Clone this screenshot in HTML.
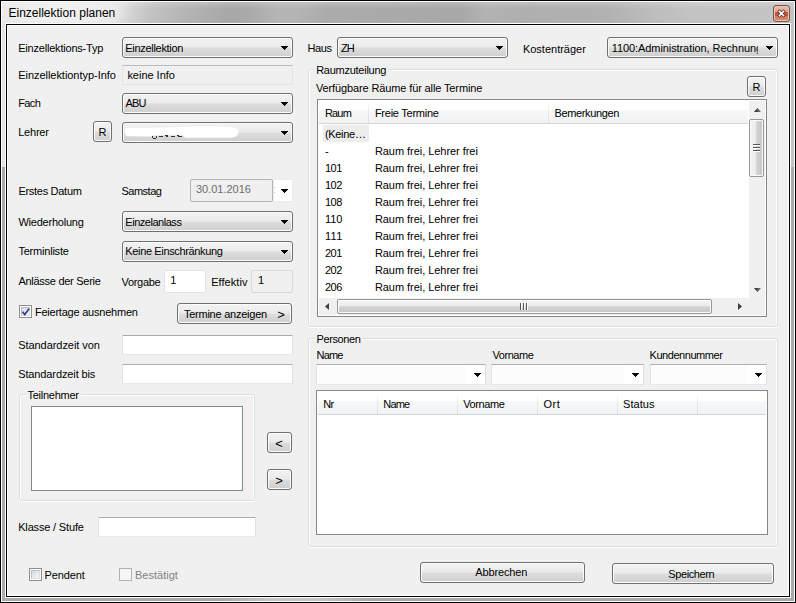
<!DOCTYPE html>
<html><head><meta charset="utf-8"><title>Einzellektion planen</title>
<style>
*{box-sizing:border-box;margin:0;padding:0}
html,body{width:796px;height:603px;overflow:hidden;background:#fff}
body{position:relative;font-family:'Liberation Sans',sans-serif;font-size:11px;color:#000}
.a{position:absolute}
.t{position:absolute;white-space:nowrap;height:13px;line-height:13px;font-size:11px}
.btn{position:absolute;border:1px solid #707070;border-radius:3px;
 background:linear-gradient(#f2f2f2 0%,#ebebeb 49%,#dddddd 51%,#cfcfcf 100%);
 box-shadow:inset 0 0 0 1px #fcfcfc}
.arr{position:absolute;width:0;height:0;border-left:4px solid transparent;border-right:4px solid transparent;border-top:4px solid #000}
.ed{position:absolute;background:#fff;border:1px solid #e2e3ea;border-top-color:#abadb3;border-bottom-color:#e3e9ef;border-right-color:#dbdfe6;border-radius:1px}
.ro{background:#f0f0f0;border-color:#e2e6ea;border-top-color:#b9bdc3}
.lt{border-color:#e1e5ea;border-radius:2px}
.rd{border-color:#d6dadf;border-radius:2px}
.gb{position:absolute;border:1px solid #d5dfe5;border-radius:3px;box-shadow:inset 1px 1px 0 #fff,inset -1px 0 0 #fff,0 1px 0 #fff}
.lv{position:absolute;background:#fff;border:1px solid #828790}
.hd{position:absolute;background:linear-gradient(#ffffff 0%,#ffffff 40%,#f7f8fa 41%,#f1f2f4 100%);border-bottom:1px solid #d5d5d5}
.hs{position:absolute;width:1px;background:linear-gradient(#ffffff,#e3e4e6 60%,#dedfe1)}
.cb{position:absolute;width:13px;height:13px;border:1px solid #8e8f8f;background:#fdfdfd}
.cbi{position:absolute;left:1px;top:1px;width:9px;height:9px;border:1px solid;border-color:#bcc0c6 #dcdee1 #dfe1e4 #bcc0c6;background:linear-gradient(135deg,#d6d9de,#f6f6f6)}
</style></head>
<body>
<div class="a" style="left:0px;top:0px;width:796px;height:603px;background:#000;"></div>
<div class="a" style="left:1px;top:1px;width:794px;height:601px;background:#fff;"></div>
<div class="a" style="left:2px;top:2px;width:792px;height:599px;background:#aaaaaa;"></div>
<div class="a" style="left:2px;top:2px;width:792px;height:165px;background:linear-gradient(90deg,#e4e4e4 0%,#e4e4e4 50%,#c3c3c3 50%,#c3c3c3 100%);"></div>
<div class="a" style="left:2px;top:2px;width:792px;height:21px;background:linear-gradient(100deg,#e8e8e8 0%,#e5e5e5 14.5%,#d2d2d2 16.5%,#c2c2c2 19%,#b5b5b5 23%,#a8a8a8 28.5%,#a9a9a9 31%,#b5b5b5 35%,#b4b4b4 37.5%,#ababab 41%,#a8a8a8 58%,#b2b2b2 61%,#afafaf 66%,#b1b1b1 76%,#bcbcbc 82%,#c3c3c3 87%,#c4c4c4 100%);"></div>
<div class="a" style="left:2px;top:2px;width:792px;height:7px;background:linear-gradient(rgba(255,255,255,.2),rgba(255,255,255,0));"></div>
<div class="a" style="left:2px;top:598px;width:792px;height:3px;background:linear-gradient(90deg,#aaaaaa 0%,#aaaaaa 28%,#c6c6c6 34%,#c6c6c6 40%,#aaaaaa 46%,#aaaaaa 100%);"></div>
<div class="a" style="left:5px;top:23px;width:786px;height:575px;background:#fff;"></div>
<div class="a" style="left:6px;top:24px;width:784px;height:573px;background:#000;"></div>
<div class="a" style="left:7px;top:25px;width:782px;height:571px;background:#fff;"></div>
<div class="a" style="left:8px;top:26px;width:780px;height:569px;background:#f0f0f0;"></div>
<div class="a" style="left:2px;top:2px;width:140px;height:21px;background:radial-gradient(ellipse 70px 14px at 62px 11px,rgba(255,255,255,.5) 0%,rgba(255,255,255,.3) 60%,rgba(255,255,255,0) 100%)"></div>
<div class="t" style="left:8.5px;top:6px;font-size:12px;height:15px;line-height:15px;letter-spacing:0px" id="title">Einzellektion planen</div>
<div class="a" style="left:773px;top:5px;width:17px;height:17px;border:1px solid #5c5c62;border-radius:3px;background:linear-gradient(#f0b8a4 0%,#e8a28c 40%,#c9502c 42%,#cb5430 66%,#dc7a5a 70%,#e08a6a 100%);box-shadow:inset 0 0 0 1px #f4c0ac"></div>
<svg class="a" style="left:777px;top:9px" width="9" height="9" viewBox="0 0 9 9"><path d="M2.4 2.4 L6.600 6.600 M6.600 2.400 L2.400 6.600" stroke="#4a3a40" stroke-width="3.2" stroke-linecap="square"/><path d="M2.500 2.500 L6.500 6.500 M6.500 2.500 L2.500 6.500" stroke="#fff" stroke-width="1.700" stroke-linecap="square"/></svg>
<div class="btn" style="left:122px;top:37px;width:171px;height:21px"></div>
<svg class="a" style="left:281px;top:46px" width="7" height="4" viewBox="0 0 7 4" shape-rendering="crispEdges"><path d="M0 0h7v1h-1v1h-1v1h-1v1h-1v-1h-1v-1h-1v-1h-1z" fill="#000"/></svg>
<div class="ed ro" style="left:122px;top:65px;width:171px;height:20px"></div>
<div class="btn" style="left:122px;top:93px;width:171px;height:21px"></div>
<svg class="a" style="left:281px;top:102px" width="7" height="4" viewBox="0 0 7 4" shape-rendering="crispEdges"><path d="M0 0h7v1h-1v1h-1v1h-1v1h-1v-1h-1v-1h-1v-1h-1z" fill="#000"/></svg>
<div class="btn" style="left:93px;top:121px;width:19px;height:21px"></div>
<div class="btn" style="left:122px;top:122px;width:171px;height:21px"></div>
<svg class="a" style="left:281px;top:131px" width="7" height="4" viewBox="0 0 7 4" shape-rendering="crispEdges"><path d="M0 0h7v1h-1v1h-1v1h-1v1h-1v-1h-1v-1h-1v-1h-1z" fill="#000"/></svg>
<svg class="a" style="left:122px;top:122px" width="171" height="21" viewBox="0 0 171 21"><path d="M3 8 Q3 6 6 6 L40 5.800 L60 5 Q70 4 80 4.300 L106 4.800 Q116.500 5.500 116.500 10 Q116.500 15.700 108 15.700 L63 15.700 L61 13.200 L31 13.500 L30 14.400 L6 14.300 Q3 14 3 10 Z" fill="#fff"/></svg>
<div class="a" style="left:190px;top:179px;width:83px;height:23px;background:#efefef;border:1px solid #b5b5b5;border-radius:2px"></div>
<div class="a" style="left:273px;top:179px;width:20px;height:23px;background:#fff;border:1px solid #e9ecf0"></div>
<div class="a" style="left:274px;top:187px;width:1px;height:1px;background:#f3b080"></div><div class="a" style="left:274px;top:192px;width:1px;height:1px;background:#f3b080"></div>
<svg class="a" style="left:281px;top:189px" width="7" height="4" viewBox="0 0 7 4" shape-rendering="crispEdges"><path d="M0 0h7v1h-1v1h-1v1h-1v1h-1v-1h-1v-1h-1v-1h-1z" fill="#000"/></svg>
<div class="btn" style="left:122px;top:211px;width:171px;height:21px"></div>
<svg class="a" style="left:281px;top:220px" width="7" height="4" viewBox="0 0 7 4" shape-rendering="crispEdges"><path d="M0 0h7v1h-1v1h-1v1h-1v1h-1v-1h-1v-1h-1v-1h-1z" fill="#000"/></svg>
<div class="btn" style="left:122px;top:241px;width:171px;height:21px"></div>
<svg class="a" style="left:281px;top:250px" width="7" height="4" viewBox="0 0 7 4" shape-rendering="crispEdges"><path d="M0 0h7v1h-1v1h-1v1h-1v1h-1v-1h-1v-1h-1v-1h-1z" fill="#000"/></svg>
<div class="ed lt" style="left:164px;top:270px;width:42px;height:23px"></div>
<div class="ed ro rd" style="left:251px;top:270px;width:42px;height:23px"></div>
<div class="cb" style="left:19px;top:305px"><div class="cbi"></div></div>
<svg class="a" style="left:21px;top:307px" width="10" height="10" viewBox="0 0 10 10"><path d="M1.5 4.8 L3.8 7.6 L8.2 1.4" fill="none" stroke="#35418f" stroke-width="1.7"/></svg>
<div class="btn" style="left:177px;top:303px;width:115px;height:21px"></div>
<div class="ed " style="left:122px;top:335px;width:171px;height:20px"></div>
<div class="ed " style="left:122px;top:364px;width:171px;height:20px"></div>
<div class="gb" style="left:19px;top:394px;width:236px;height:107px"></div>
<div class="lv" style="left:31px;top:406px;width:212px;height:85px"></div>
<div class="btn" style="left:267px;top:432px;width:25px;height:21px"></div>
<div class="btn" style="left:267px;top:469px;width:25px;height:21px"></div>
<div class="ed " style="left:98px;top:517px;width:158px;height:20px"></div>
<div class="cb" style="left:29px;top:568px"><div class="cbi"></div></div>
<div class="cb" style="left:119px;top:568px;border-color:#b1b1b1;box-shadow:none;background:#f6f6f6"></div>
<div class="a" style="left:152px;top:136px;width:1px;height:2px;background:#333;"></div>
<div class="a" style="left:153px;top:138px;width:3px;height:1px;background:#333;"></div>
<div class="a" style="left:156px;top:136px;width:1px;height:2px;background:#333;"></div>
<div class="a" style="left:159px;top:136px;width:4px;height:1px;background:#333;"></div>
<div class="a" style="left:165px;top:135px;width:3px;height:1px;background:#333;"></div>
<div class="a" style="left:166px;top:136px;width:2px;height:1px;background:#333;"></div>
<div class="a" style="left:171px;top:136px;width:4px;height:1px;background:#333;"></div>
<div class="a" style="left:177px;top:135px;width:2px;height:1px;background:#333;"></div>
<div class="a" style="left:178px;top:136px;width:4px;height:1px;background:#333;"></div>
<div class="btn" style="left:337px;top:37px;width:171px;height:21px"></div>
<svg class="a" style="left:496px;top:46px" width="7" height="4" viewBox="0 0 7 4" shape-rendering="crispEdges"><path d="M0 0h7v1h-1v1h-1v1h-1v1h-1v-1h-1v-1h-1v-1h-1z" fill="#000"/></svg>
<div class="btn" style="left:607px;top:37px;width:171px;height:21px"></div>
<svg class="a" style="left:766px;top:46px" width="7" height="4" viewBox="0 0 7 4" shape-rendering="crispEdges"><path d="M0 0h7v1h-1v1h-1v1h-1v1h-1v-1h-1v-1h-1v-1h-1z" fill="#000"/></svg>
<div class="gb" style="left:308px;top:69px;width:470px;height:258px"></div>
<div class="btn" style="left:747px;top:76px;width:19px;height:21px"></div>
<div class="lv" style="left:317px;top:99px;width:450px;height:218px;box-shadow:inset 0 0 0 1px #fff"></div>
<div class="hd" style="left:319px;top:101px;width:429px;height:23px"></div>
<div class="hs" style="left:368px;top:101px;height:22px"></div>
<div class="hs" style="left:548px;top:101px;height:22px"></div>
<div class="a" style="left:323px;top:125px;width:46px;height:17px;background:#ededed;"></div>
<div class="a" style="left:749px;top:101px;width:16px;height:197px;background:#f0f0f0;"></div>
<div class="a" style="left:749px;top:119px;width:15px;height:58px;border:1px solid #979797;border-radius:2px;background:linear-gradient(90deg,#f4f4f4 0%,#ebebeb 45%,#d2d2d2 52%,#c6c6c6 100%);box-shadow:inset 0 0 0 1px #fafafa"></div>
<div class="a" style="left:753px;top:144px;width:7px;height:2px;background:linear-gradient(#555 50%,#ffffff 50%);"></div>
<div class="a" style="left:753px;top:147px;width:7px;height:2px;background:linear-gradient(#555 50%,#ffffff 50%);"></div>
<div class="a" style="left:753px;top:150px;width:7px;height:2px;background:linear-gradient(#555 50%,#ffffff 50%);"></div>
<svg class="a" style="left:753px;top:107px" width="9" height="6" viewBox="0 0 9 6"><defs><linearGradient id="ag" x1="0" y1="0" x2="1" y2="0"><stop offset="0" stop-color="#202020"/><stop offset="1" stop-color="#808080"/></linearGradient></defs><path d="M1 5 L4.5 1 L8 5 Z" fill="url(#ag)"/></svg>
<svg class="a" style="left:753px;top:287px" width="9" height="6" viewBox="0 0 9 6"><path d="M1 1 L8 1 L4.5 5 Z" fill="url(#ag)"/></svg>
<div class="a" style="left:319px;top:298px;width:429px;height:17px;background:#f0f0f0;"></div>
<div class="a" style="left:748px;top:298px;width:17px;height:17px;background:#f0f0f0;"></div>
<div class="a" style="left:337px;top:299px;width:375px;height:15px;border:1px solid #979797;border-radius:2px;background:linear-gradient(#f4f4f4 0%,#ebebeb 45%,#d2d2d2 52%,#c6c6c6 100%);box-shadow:inset 0 0 0 1px #fafafa"></div>
<div class="a" style="left:520px;top:303px;width:2px;height:7px;background:linear-gradient(90deg,#555 50%,#ffffff 50%);"></div>
<div class="a" style="left:523px;top:303px;width:2px;height:7px;background:linear-gradient(90deg,#555 50%,#ffffff 50%);"></div>
<div class="a" style="left:526px;top:303px;width:2px;height:7px;background:linear-gradient(90deg,#555 50%,#ffffff 50%);"></div>
<svg class="a" style="left:324px;top:302px" width="6" height="9" viewBox="0 0 6 9"><path d="M5 1 L1 4.5 L5 8 Z" fill="#404040"/></svg>
<svg class="a" style="left:737px;top:302px" width="6" height="9" viewBox="0 0 6 9"><path d="M1 1 L5 4.5 L1 8 Z" fill="#404040"/></svg>
<div class="gb" style="left:308px;top:338px;width:470px;height:209px"></div>
<div class="ed" style="left:316px;top:364px;width:170px;height:21px;background:#fcfcfc"></div>
<div class="a" style="left:466px;top:365px;width:19px;height:19px;background:#fff;"></div>
<svg class="a" style="left:474px;top:373px" width="7" height="4" viewBox="0 0 7 4" shape-rendering="crispEdges"><path d="M0 0h7v1h-1v1h-1v1h-1v1h-1v-1h-1v-1h-1v-1h-1z" fill="#000"/></svg>
<div class="ed" style="left:491px;top:364px;width:153px;height:21px;background:#fcfcfc"></div>
<div class="a" style="left:624px;top:365px;width:19px;height:19px;background:#fff;"></div>
<svg class="a" style="left:632px;top:373px" width="7" height="4" viewBox="0 0 7 4" shape-rendering="crispEdges"><path d="M0 0h7v1h-1v1h-1v1h-1v1h-1v-1h-1v-1h-1v-1h-1z" fill="#000"/></svg>
<div class="ed" style="left:650px;top:364px;width:117px;height:21px;background:#fcfcfc"></div>
<div class="a" style="left:747px;top:365px;width:19px;height:19px;background:#fff;"></div>
<svg class="a" style="left:755px;top:373px" width="7" height="4" viewBox="0 0 7 4" shape-rendering="crispEdges"><path d="M0 0h7v1h-1v1h-1v1h-1v1h-1v-1h-1v-1h-1v-1h-1z" fill="#000"/></svg>
<div class="lv" style="left:316px;top:390px;width:452px;height:145px;box-shadow:inset 0 0 0 1px #fff"></div>
<div class="hd" style="left:318px;top:392px;width:448px;height:23px"></div>
<div class="hs" style="left:377px;top:392px;height:22px"></div>
<div class="hs" style="left:457px;top:392px;height:22px"></div>
<div class="hs" style="left:537px;top:392px;height:22px"></div>
<div class="hs" style="left:617px;top:392px;height:22px"></div>
<div class="hs" style="left:697px;top:392px;height:22px"></div>
<div class="btn" style="left:420px;top:562px;width:165px;height:21px"></div>
<div class="btn" style="left:612px;top:563px;width:162px;height:21px"></div>
<div class="t" style="left:18.2px;top:41.5px;letter-spacing:-0.203px;">Einzellektions-Typ</div>
<div class="t" style="left:18.2px;top:68.5px;letter-spacing:-0.038px;">Einzellektiontyp-Info</div>
<div class="t" style="left:18.2px;top:96.5px;letter-spacing:-0.590px;">Fach</div>
<div class="t" style="left:18.2px;top:125.5px;letter-spacing:-0.219px;">Lehrer</div>
<div class="t" style="left:18.4px;top:184.9px;letter-spacing:-0.286px;">Erstes Datum</div>
<div class="t" style="left:121.5px;top:184.9px;letter-spacing:-0.504px;">Samstag</div>
<div class="t" style="left:18.4px;top:215.8px;letter-spacing:-0.216px;">Wiederholung</div>
<div class="t" style="left:18.4px;top:244.5px;letter-spacing:-0.208px;">Terminliste</div>
<div class="t" style="left:18.4px;top:275.3px;letter-spacing:-0.271px;">Anlässe der Serie</div>
<div class="t" style="left:121.5px;top:275.8px;letter-spacing:-0.297px;">Vorgabe</div>
<div class="t" style="left:211.2px;top:275.8px;letter-spacing:0.046px;">Effektiv</div>
<div class="t" style="left:34.9px;top:305.5px;letter-spacing:-0.223px;">Feiertage ausnehmen</div>
<div class="t" style="left:18.2px;top:338.5px;letter-spacing:-0.057px;">Standardzeit von</div>
<div class="t" style="left:18.2px;top:367.5px;letter-spacing:-0.113px;">Standardzeit bis</div>
<div class="t" style="left:27.5px;top:388.5px;letter-spacing:-0.268px;background:#f0f0f0;box-shadow:-2px 0 0 #f0f0f0,2px 0 0 #f0f0f0;">Teilnehmer</div>
<div class="t" style="left:18.2px;top:520.8px;letter-spacing:-0.167px;">Klasse / Stufe</div>
<div class="t" style="left:44.4px;top:568.5px;letter-spacing:-0.081px;">Pendent</div>
<div class="t" style="left:134.9px;top:568.5px;letter-spacing:0.023px;color:#838383;">Bestätigt</div>
<div class="t" style="left:125.3px;top:41.5px;letter-spacing:-0.305px;">Einzellektion</div>
<div class="t" style="left:127.4px;top:68.5px;letter-spacing:-0.023px;">keine Info</div>
<div class="t" style="left:125.5px;top:97.0px;letter-spacing:-0.800px;">ABU</div>
<div class="t" style="left:125.3px;top:215.5px;letter-spacing:-0.470px;">Einzelanlass</div>
<div class="t" style="left:125.3px;top:245.2px;letter-spacing:-0.354px;">Keine Einschränkung</div>
<div class="t" style="left:195.9px;top:182.8px;letter-spacing:-0.007px;color:#6d6d6d;">30.01.2016</div>
<div class="t" style="left:170.3px;top:274.0px;">1</div>
<div class="t" style="left:257.9px;top:274.0px;">1</div>
<div class="t" style="left:183.9px;top:307.9px;letter-spacing:-0.236px;">Termine anzeigen</div>
<div class="t" style="left:277.2px;top:307.9px;font-size:13px;">></div>
<div class="t" style="left:275.2px;top:436.5px;font-size:13px;"><</div>
<div class="t" style="left:275.2px;top:473.5px;font-size:13px;">></div>
<div class="t" style="left:98.4px;top:125.5px;">R</div>
<div class="t" style="left:752.4px;top:80.5px;">R</div>
<div class="t" style="left:307.4px;top:41.5px;letter-spacing:-0.396px;">Haus</div>
<div class="t" style="left:340.9px;top:41.5px;letter-spacing:-0.800px;">ZH</div>
<div class="t" style="left:522.9px;top:42.5px;letter-spacing:0.001px;">Kostenträger</div>
<div class="t" style="left:611.7px;top:41.5px;width:146px;overflow:hidden;letter-spacing:-0.08px;">1100:Administration, Rechnungswesen</div>
<div class="t" style="left:316.2px;top:64.2px;letter-spacing:-0.265px;background:#f0f0f0;box-shadow:-2px 0 0 #f0f0f0,2px 0 0 #f0f0f0;">Raumzuteilung</div>
<div class="t" style="left:315.9px;top:81.5px;letter-spacing:-0.122px;">Verfügbare Räume für alle Termine</div>
<div class="t" style="left:324.9px;top:106.5px;letter-spacing:-0.800px;">Raum</div>
<div class="t" style="left:374.9px;top:106.5px;letter-spacing:-0.254px;">Freie Termine</div>
<div class="t" style="left:554.4px;top:106.5px;letter-spacing:-0.350px;">Bemerkungen</div>
<div class="t" style="left:324.9px;top:128.0px;letter-spacing:-0.299px;">(Keine…</div>
<div class="t" style="left:324.9px;top:145.0px;">-</div>
<div class="t" style="left:374.9px;top:145.0px;letter-spacing:-0.045px;">Raum frei, Lehrer frei</div>
<div class="t" style="left:324.9px;top:162.0px;letter-spacing:-0.430px;">101</div>
<div class="t" style="left:374.9px;top:162.0px;letter-spacing:-0.045px;">Raum frei, Lehrer frei</div>
<div class="t" style="left:324.9px;top:179.0px;letter-spacing:-0.430px;">102</div>
<div class="t" style="left:374.9px;top:179.0px;letter-spacing:-0.045px;">Raum frei, Lehrer frei</div>
<div class="t" style="left:324.9px;top:196.0px;letter-spacing:-0.430px;">108</div>
<div class="t" style="left:374.9px;top:196.0px;letter-spacing:-0.045px;">Raum frei, Lehrer frei</div>
<div class="t" style="left:324.9px;top:213.0px;letter-spacing:-0.023px;">110</div>
<div class="t" style="left:374.9px;top:213.0px;letter-spacing:-0.045px;">Raum frei, Lehrer frei</div>
<div class="t" style="left:324.9px;top:230.0px;letter-spacing:0.383px;">111</div>
<div class="t" style="left:374.9px;top:230.0px;letter-spacing:-0.045px;">Raum frei, Lehrer frei</div>
<div class="t" style="left:324.9px;top:247.0px;letter-spacing:-0.430px;">201</div>
<div class="t" style="left:374.9px;top:247.0px;letter-spacing:-0.045px;">Raum frei, Lehrer frei</div>
<div class="t" style="left:324.9px;top:264.0px;letter-spacing:-0.430px;">202</div>
<div class="t" style="left:374.9px;top:264.0px;letter-spacing:-0.045px;">Raum frei, Lehrer frei</div>
<div class="t" style="left:324.9px;top:281.0px;letter-spacing:-0.430px;">206</div>
<div class="t" style="left:374.9px;top:281.0px;letter-spacing:-0.045px;">Raum frei, Lehrer frei</div>
<div class="t" style="left:316.6px;top:332.5px;letter-spacing:-0.399px;background:#f0f0f0;box-shadow:-2px 0 0 #f0f0f0,2px 0 0 #f0f0f0;">Personen</div>
<div class="t" style="left:316.5px;top:348.8px;letter-spacing:-0.800px;">Name</div>
<div class="t" style="left:492.5px;top:348.8px;letter-spacing:-0.439px;">Vorname</div>
<div class="t" style="left:649.5px;top:348.8px;letter-spacing:-0.444px;">Kundennummer</div>
<div class="t" style="left:323.3px;top:397.9px;letter-spacing:-0.800px;">Nr</div>
<div class="t" style="left:383.3px;top:397.9px;letter-spacing:-0.800px;">Name</div>
<div class="t" style="left:463.2px;top:397.9px;letter-spacing:-0.389px;">Vorname</div>
<div class="t" style="left:543.5px;top:397.9px;letter-spacing:0.559px;">Ort</div>
<div class="t" style="left:623.1px;top:397.9px;letter-spacing:0.022px;">Status</div>
<div class="t" style="left:475.3px;top:566.3px;letter-spacing:-0.152px;">Abbrechen</div>
<div class="t" style="left:668.3px;top:567.5px;letter-spacing:-0.393px;">Speichern</div>
</body></html>
